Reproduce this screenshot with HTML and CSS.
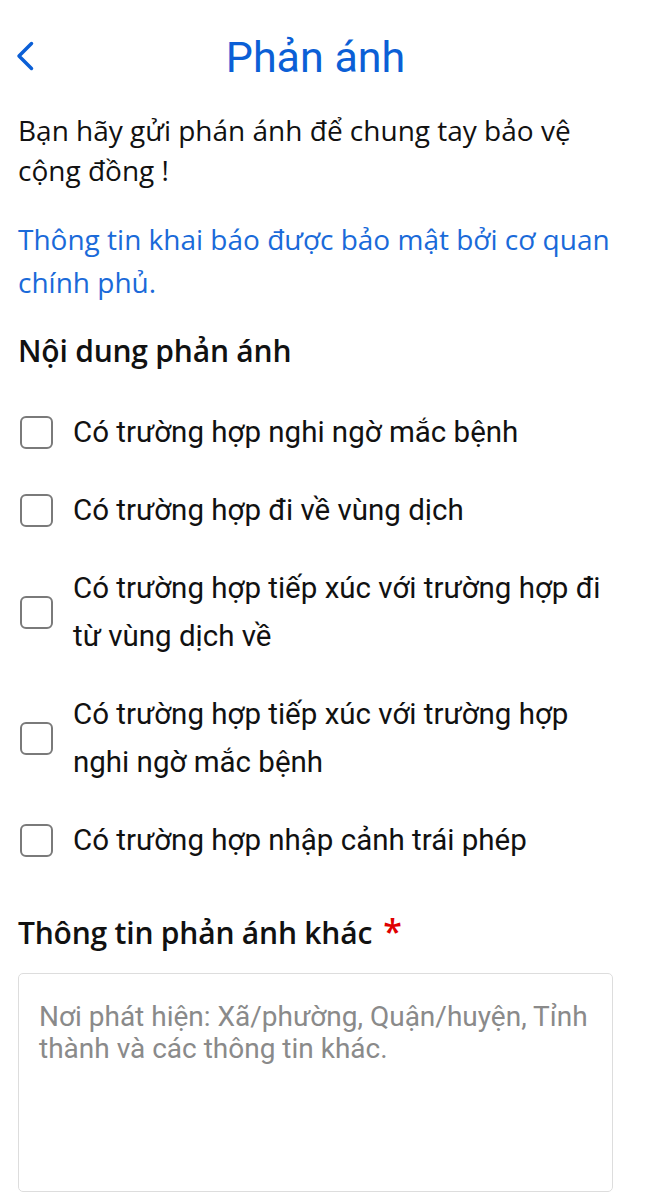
FILE: index.html
```html
<!DOCTYPE html>
<html>
<head>
  <meta charset="utf-8">
  <link rel="stylesheet" href="styles.css">
  <title>Phản ánh</title>
</head>
<body>
  <div class="screen">
    <div class="top-bar">
      <button type="button" class="back-btn">
        <svg width="20" height="30" viewBox="0 0 20 30"><path d="M16.5 2.5 L4 15 L16.5 27.5" fill="none" stroke="#0b5fd6" stroke-width="3.5" stroke-linecap="round" stroke-linejoin="round"/></svg>
      </button>
      <h1 class="title">Phản ánh</h1>
    </div>

    <div class="content">
      <p class="intro">Bạn hãy gửi phán ánh để chung tay bảo vệ cộng đồng !</p>
      <p class="notice">Thông tin khai báo được bảo mật bởi cơ quan chính phủ.</p>

      <h3 class="section-title">Nội dung phản ánh</h3>

      <div class="check-list">
        <label class="check-row"><span class="box"></span><span class="check-text">Có trường hợp nghi ngờ mắc bệnh</span></label>
        <label class="check-row"><span class="box"></span><span class="check-text">Có trường hợp đi về vùng dịch</span></label>
        <label class="check-row"><span class="box"></span><span class="check-text">Có trường hợp tiếp xúc với trường hợp đi từ vùng dịch về</span></label>
        <label class="check-row"><span class="box"></span><span class="check-text">Có trường hợp tiếp xúc với trường hợp nghi ngờ mắc bệnh</span></label>
        <label class="check-row"><span class="box"></span><span class="check-text">Có trường hợp nhập cảnh trái phép</span></label>
      </div>

      <h3 class="section-title other">Thông tin phản ánh khác<span class="req">*</span></h3>

      <textarea class="other-info" placeholder="Nơi phát hiện: Xã/phường, Quận/huyện, Tỉnh thành và các thông tin khác."></textarea>
    </div>
  </div>
</body>
</html>
```

FILE: styles.css
```css
:root {
	--blue: #0b5fd6;
	--notice: #1a6ad9;
	--text: #111111;
	--grey: #8a8a8a;
}

body {
	margin: 0;
	background: white;
	color: var(--text);
	font-family: "Open Sans", sans-serif;
}

.screen {
	width: 645px;
}

.top-bar {
	position: relative;
	height: 110px;
	padding-right: 14px;
	display: flex;
	align-items: center;
	justify-content: center;
}

.back-btn {
	position: absolute;
	left: 15px;
	top: 41px;
	background: none;
	border: 0;
	padding: 0;
	line-height: 0;
}

.title {
	margin: 4px 0 0 0;
	font-family: Roboto, sans-serif;
	font-weight: 400;
	font-size: 43px;
	color: var(--blue);
}

.content {
	padding: 0 18px;
}

.intro {
	margin: 0;
	font-size: 28px;
	line-height: 40px;
}

.notice {
	margin: 28px 0 0 0;
	font-size: 28px;
	line-height: 43px;
	color: var(--notice);
}

.section-title {
	margin: 25px 0 0 0;
	font-size: 30px;
	font-weight: 600;
	letter-spacing: -0.2px;
	line-height: 44px;
}

.check-list {
	margin-top: 35px;
	display: flex;
	flex-direction: column;
	gap: 30px;
}

.check-row {
	display: flex;
	align-items: center;
	gap: 20px;
}

.box {
	flex: none;
	box-sizing: border-box;
	width: 33px;
	height: 33px;
	margin-left: 2px;
	border: 2px solid #7a7a7a;
	border-radius: 6px;
}

.check-text {
	font-family: Roboto, sans-serif;
	font-size: 29.5px;
	line-height: 48px;
}

.section-title.other {
	margin-top: 45px;
}

.req {
	margin-left: 11px;
	color: #e00000;
	font-size: 34px;
}

.other-info {
	display: block;
	box-sizing: border-box;
	width: 595px;
	height: 219px;
	margin-top: 18px;
	padding: 27px 20px;
	border: 1.5px solid #dddddd;
	border-radius: 5px;
	resize: none;
	font-family: Roboto, sans-serif;
	font-size: 28px;
	line-height: 32px;
	color: var(--text);
}

.other-info::placeholder {
	color: var(--grey);
}
```
